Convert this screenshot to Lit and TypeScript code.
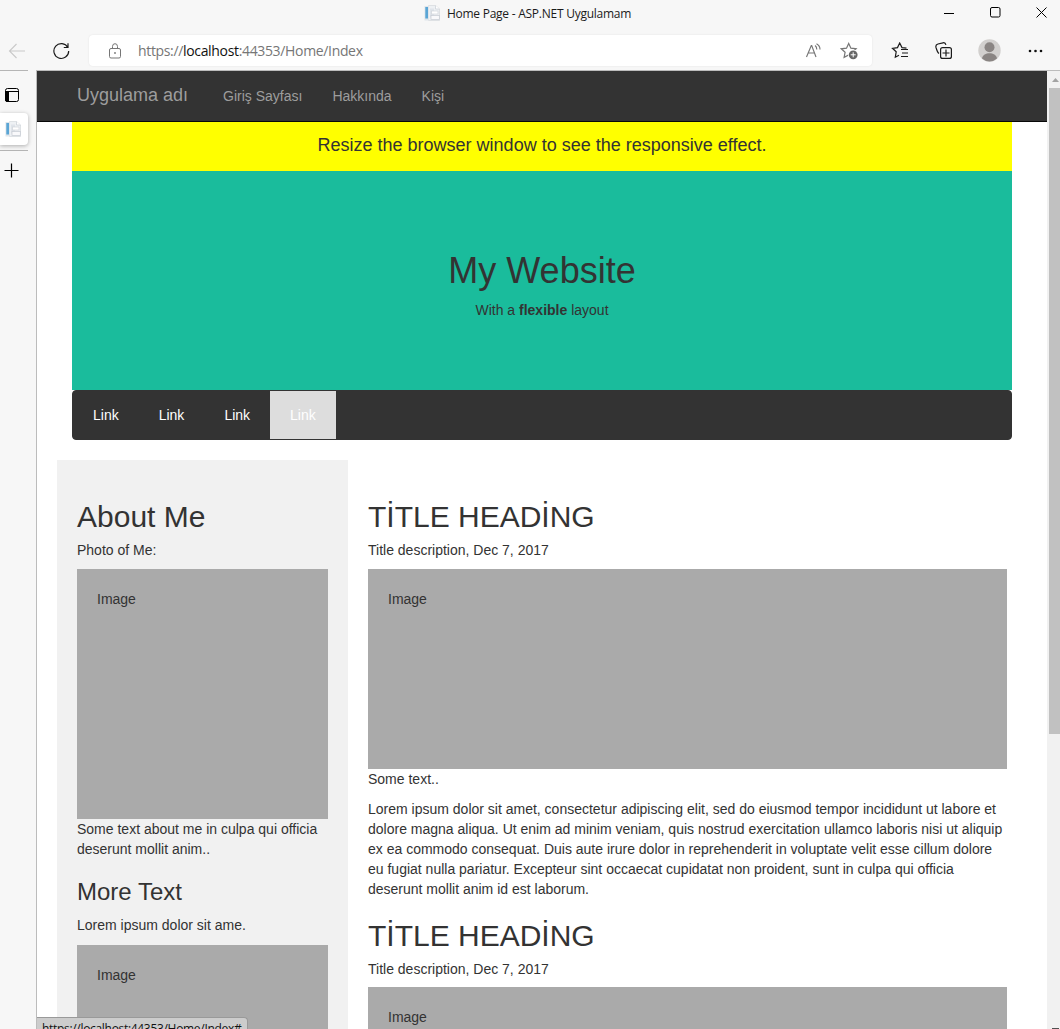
import { LitElement, html, css, svg } from "lit";
import { customElement } from "lit/decorators.js";

const icon = (w: number, h: number, body: unknown) =>
  html`<svg class="icon" width=${w} height=${h} viewBox="0 0 ${w} ${h}" fill="none" stroke="currentColor">${body}</svg>`;

const favicon = () => html`<svg class="icon" width="16" height="16" viewBox="0 0 16 16">
  <path d="M4.500 .5h7l4 3.500v11.500h-11z" fill="#eef1f4" stroke="#d8dce0" stroke-width=".8"/>
  <path d="M11.500 .5v3.500h4" fill="#fff" stroke="#cbd2d8" stroke-width=".8"/>
  <rect x="6" y="3.500" width="4" height="9" fill="#dfe4ea"/>
  <rect x="7.500" y="6" width="6.500" height="3" fill="#fff" stroke="#d0d4da" stroke-width=".7"/>
  <rect x="7" y="10.500" width="8.300" height="4" fill="#f9f9fb" stroke="#c5cad2" stroke-width=".7"/>
  <rect x=".5" y="1" width="4.300" height="14.500" fill="#e0e6eb"/>
  <rect x="1.300" y="2" width="2.700" height="11.500" fill="#5aa5d5"/>
</svg>`;

@customElement("browser-chrome")
export class BrowserChrome extends LitElement {
  static styles = css`
    :host { display: block; height: 70px; background: #f7f7f7; color: #1b1b1b; font-family: "Open Sans", "Noto Sans", sans-serif; }
    .icon { display: block; flex: none; }
    .titlebar { height: 35px; display: grid; grid-template-columns: 1fr auto 1fr; padding: 0 13px 0 8px; box-sizing: border-box; }
    .title { grid-column: 2; display: flex; gap: 7px; height: 26px; align-items: center; font-size: 12px; white-space: nowrap; letter-spacing: -0.25px; }
    .window { display: flex; justify-content: flex-end; gap: 35px; height: 24px; align-items: center; }
    .toolbar { display: flex; align-items: center; height: 31px; padding-left: 8px; }
    .address { display: flex; align-items: center; box-sizing: border-box; width: 783px; height: 31px; margin-left: 19px; padding: 0 13px 0 19px; background: #fff; border-radius: 4px; box-shadow: 0 0 2px #00000018; color: #767676; }
    .url { margin-left: 16px; font-size: 14px; white-space: nowrap; letter-spacing: -0.34px; }
    .host { color: #111; }
    .reader { margin-left: auto; margin-right: 18px; display: flex; }
    .reload { margin-left: 27px; }
    .back { color: #c9c9c9; display: flex; }
    .actions { display: flex; align-items: center; margin-left: 19px; gap: 26px; }
  `;
  render() {
    return html`
      <div class="titlebar">
        <div class="title">${favicon()}<span>Home Page - ASP.NET Uygulamam</span></div>
        <div class="window">
          ${icon(11, 11, svg`<path d="M0 6.500h10" stroke="#000"/>`)}
          ${icon(11, 11, svg`<rect x=".5" y=".5" width="9.500" height="9.500" rx="1.500" stroke="#000"/>`)}
          ${icon(11, 11, svg`<path d="M.5 .5l10 10M10.500 .5l-10 10" stroke="#000"/>`)}
        </div>
      </div>
      <div class="toolbar">
        <span class="back">${icon(18, 16, svg`<path d="M17 8H1.500M8.500 1L1.500 8l7 7" stroke-width="1.100"/>`)}</span>
        <span class="reload">${icon(17, 18, svg`<path d="M14.800 5.500A7.400 7.400 0 1 0 15.700 9M15 1.200v4.300H10.800" stroke-width="1.200"/>`)}</span>
        <div class="address">
          ${icon(14, 16, svg`<rect x="1.500" y="5.500" width="11" height="9.500" rx="1.500"/><path d="M4.500 5.500V3.500a2.500 2.800 0 0 1 5 0v2"/><circle cx="7" cy="10" r=".9" fill="currentColor" stroke="none"/>`)}
          <span class="url">https://<span class="host">localhost</span>:44353/Home/Index</span>
          <span class="reader">${icon(17, 16, svg`<path d="M1.500 14L6.300 2.500h.4L11 14M3 10h6.500M10 2.500c1.300.9 1.800 2.200 1.800 4M11.500 .8c2.500 1.300 3.500 3.200 3.500 5.700" stroke-width="1.150"/>`)}</span>
          ${icon(19, 18, svg`<path d="M8.700 1.500l2.200 4.700 5.200.6-3.800 3.500 1 5.100-4.600-2.500-4.600 2.500 1-5.100L1.300 6.800l5.200-.6z" stroke-width="1.200"/><circle cx="13.200" cy="12.800" r="5.200" fill="#fff" stroke="none"/><circle cx="13.200" cy="12.800" r="4.400" fill="#666" stroke="none"/><path d="M10.700 12.800h5M13.200 10.300v5" stroke="#fff"/>`)}
        </div>
        <div class="actions">
          ${icon(18, 17, svg`<path d="M15.500 6.200L11 5.600 8.700 1 6.500 5.600l-5 .7 3.700 3.500-.9 5.400 3.700-2M10 7.500h7M11 11h6M10 14.500h7" stroke-width="1.200"/>`)}
          ${icon(17, 17, svg`<path d="M4 11.500C2.500 10.500 2 9 1 5.500.5 3.500 1 2.500 3 2l5-1.200c1.500-.3 2.500.2 2.900 2" stroke-width="1.200"/><rect x="5.600" y="5.600" width="10.800" height="10.800" rx="2" stroke-width="1.200"/><path d="M7.500 11h7M11 7.500v7" stroke-width="1.200"/>`)}
          ${icon(23, 23, svg`<circle cx="11.500" cy="11.500" r="11.200" fill="#d2d0ce" stroke="none"/><circle cx="11.500" cy="8.200" r="5" fill="#8a8583" stroke="none"/><path d="M4 19.500c1-7 14-7 15 0a11 11 0 0 1-15 0z" fill="#8a8583" stroke="none"/>`)}
          ${icon(16, 4, svg`<g fill="#111" stroke="none"><circle cx="3" cy="2" r="1.300"/><circle cx="8.500" cy="2" r="1.300"/><circle cx="14" cy="2" r="1.300"/></g>`)}
        </div>
      </div>`;
  }
}

@customElement("tab-strip")
export class TabStrip extends LitElement {
  static styles = css`
    :host { display: block; width: 36px; background: #f7f7f7; border-right: 1px solid #bcbcbc; color: #000; }
    .icon { display: block; }
    .list { width: 28px; border-top: 1px solid #b5b5b5; border-bottom: 1px solid #b5b5b5; height: 79px; }
    .pane { padding: 17px 0 0 5px; height: 25px; }
    .tab { height: 32px; display: flex; align-items: center; padding-left: 5px; background: #fff; border-radius: 0 4px 4px 0; box-shadow: 0 1px 4px #0000004d; }
    .add { padding: 12px 0 0 4px; }
  `;
  render() {
    return html`
      <div class="list">
        <div class="pane">${icon(14, 14, svg`<rect x=".5" y=".5" width="13" height="13" rx="2"/><path d="M1 3.500h12"/><path d="M.5 3.500h3v10H2a1.500 1.500 0 0 1-1.500-1.500z" fill="#000"/>`)}</div>
        <div class="tab">${favicon()}</div>
      </div>
      <div class="add">${icon(15, 15, svg`<path d="M.5 7.500h14M7.500 .5v14" stroke-width="1.200"/>`)}</div>`;
  }
}

const lorem =
  "Lorem ipsum dolor sit amet, consectetur adipiscing elit, sed do eiusmod tempor incididunt ut labore et dolore magna aliqua. Ut enim ad minim veniam, quis nostrud exercitation ullamco laboris nisi ut aliquip ex ea commodo consequat. Duis aute irure dolor in reprehenderit in voluptate velit esse cillum dolore eu fugiat nulla pariatur. Excepteur sint occaecat cupidatat non proident, sunt in culpa qui officia deserunt mollit anim id est laborum.";

@customElement("site-page")
export class SitePage extends LitElement {
  static styles = css`
    :host { display: block; background: #fff; color: #333; font: 14px/20px "Liberation Sans", Arial, sans-serif; overflow: hidden; }
    h1, h2, h3, h4, h5, p { font-weight: 400; margin: 0 0 10px; line-height: 1.1; }
    h1 { font-size: 36px; }
    h2 { font-size: 30px; margin-top: 20px; }
    h3 { font-size: 24px; margin-top: 20px; }
    h5 { font-size: 14px; }
    p { line-height: 20px; }
    .topbar { display: flex; align-items: center; height: 50px; background: #333; border-bottom: 1px solid #080808; padding-left: 40px; color: #9d9d9d; white-space: nowrap; }
    .brand { font-size: 18px; margin: -3px 35px 0 0; }
    .menu { display: flex; gap: 30px; }
    .container { margin: 0 35px; }
    .notice { height: 49px; box-sizing: border-box; padding-top: 13px; background: #ff0; text-align: center; font-size: 18px; }
    .hero { height: 219px; box-sizing: border-box; padding-top: 79.8px; background: #1abc9c; text-align: center; }
    .links { display: flex; box-sizing: border-box; height: 50px; background: #333; border: 1px solid #333; border-radius: 4px; color: #fff; }
    .link { padding: 14px 20px; }
    .active { background: #ddd; }
    .row { display: flex; margin: 20px 20px 0; }
    .side { flex: 0 0 251px; padding: 20.200px 20px 20px; background: #f1f1f1; }
    .main { flex: 1; padding: 20.200px 20px 20px; min-width: 0; }
    .image { background: #aaa; height: 200px; padding: 20px; box-sizing: border-box; }
    .photo { height: 250px; }
  `;
  private article() {
    return html`<h2>TİTLE HEADİNG</h2><h5>Title description, Dec 7, 2017</h5>
      <div class="image">Image</div><p>Some text..</p><p>${lorem}</p>`;
  }
  render() {
    return html`
      <nav class="topbar">
        <span class="brand">Uygulama adı</span>
        <div class="menu"><span>Giriş Sayfası</span><span>Hakkında</span><span>Kişi</span></div>
      </nav>
      <div class="container">
        <div class="notice">Resize the browser window to see the responsive effect.</div>
        <header class="hero"><h1>My Website</h1><p>With a <b>flexible</b> layout</p></header>
        <nav class="links">
          ${[0, 1, 2, 3].map((i) => html`<span class="link ${i === 3 ? "active" : ""}">Link</span>`)}
        </nav>
      </div>
      <div class="row">
        <aside class="side">
          <h2>About Me</h2><h5>Photo of Me:</h5>
          <div class="image photo">Image</div>
          <p>Some text about me in culpa qui officia deserunt mollit anim..</p>
          <h3>More Text</h3><p>Lorem ipsum dolor sit ame.</p>
          <div class="image">Image</div>
        </aside>
        <main class="main">${this.article()}${this.article()}</main>
      </div>`;
  }
}

@customElement("app-root")
export class AppRoot extends LitElement {
  static styles = css`
    :host { display: block; position: relative; width: 1060px; height: 1029px; overflow: hidden; background: #f7f7f7; }
    .body { display: grid; grid-template-columns: 37px 1010px 13px; height: 959px; }
    .page { border-top: 1px solid #bcbcbc; min-height: 0; overflow: hidden; }
    .scroll { border-top: 1px solid #bcbcbc; background: #f1f1f1; padding-left: 2px; overflow: hidden; display: flex; flex-direction: column; }
    .up, .down { display: block; flex: none; }
    .thumb { height: 646px; background: #c1c1c1; }
    .down { margin-top: auto; }
    .status { position: absolute; left: 37px; top: 1017px; width: 211px; height: 24px; box-sizing: border-box; padding: 2px 0 0 5px; background: #ccc; border: solid #999; border-width: 1px 1px 0 0; border-radius: 0 4px 0 0; color: #111; font: 12px/18px "Open Sans", "Noto Sans", sans-serif; letter-spacing: -0.31px; white-space: nowrap; }
  `;
  render() {
    return html`
      <browser-chrome></browser-chrome>
      <div class="body">
        <tab-strip></tab-strip>
        <div class="page"><site-page></site-page></div>
        <div class="scroll">
          <svg class="up" width="11" height="17" viewBox="0 0 11 17"><path d="M3 11l3.500-4 3.500 4z" fill="#a3a3a3"/></svg>
          <div class="thumb"></div>
          <svg class="down" width="11" height="1" viewBox="0 0 11 1"><path d="M3 0h7v1H3z" fill="#505050"/></svg>
        </div>
      </div>
      <div class="status">https://localhost:44353/Home/Index#</div>`;
  }
}
